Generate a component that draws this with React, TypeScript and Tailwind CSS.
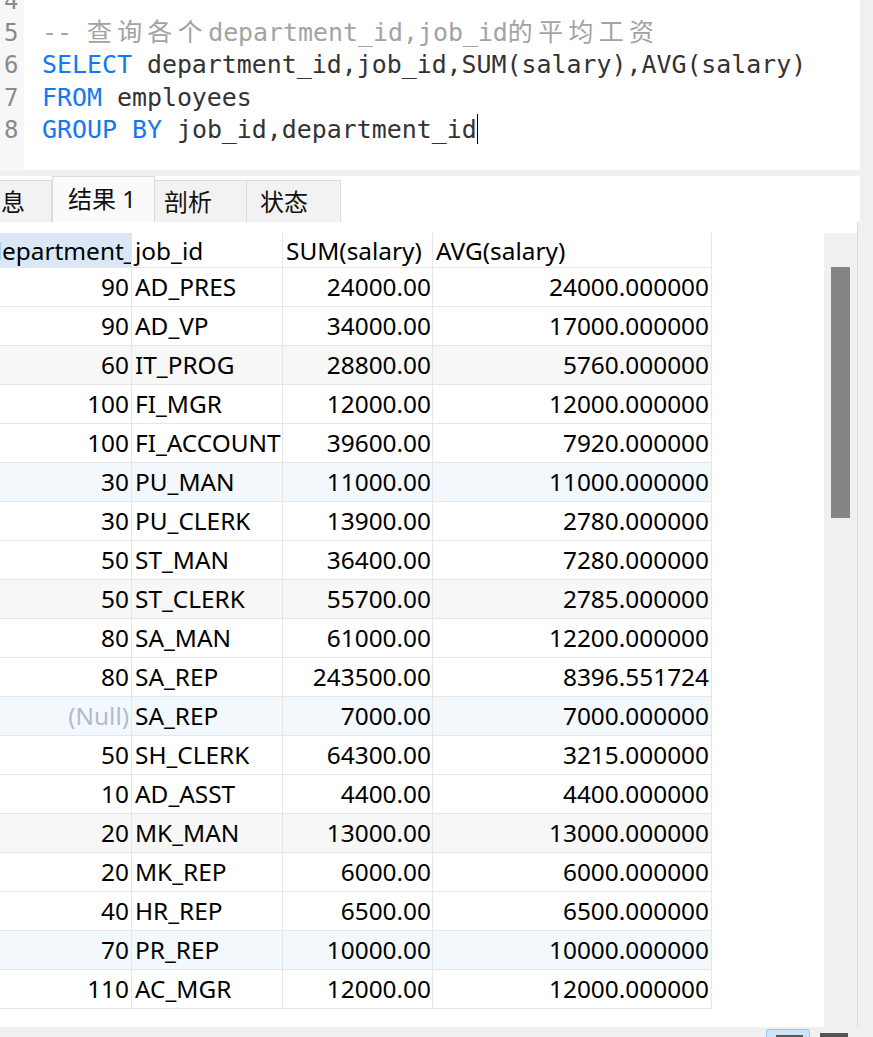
import React from 'react'

type Row = { dept: string; job: string; sum: string; avg: string }

const rows: Row[] = [
  { dept: '90', job: 'AD_PRES', sum: '24000.00', avg: '24000.000000' },
  { dept: '90', job: 'AD_VP', sum: '34000.00', avg: '17000.000000' },
  { dept: '60', job: 'IT_PROG', sum: '28800.00', avg: '5760.000000' },
  { dept: '100', job: 'FI_MGR', sum: '12000.00', avg: '12000.000000' },
  { dept: '100', job: 'FI_ACCOUNT', sum: '39600.00', avg: '7920.000000' },
  { dept: '30', job: 'PU_MAN', sum: '11000.00', avg: '11000.000000' },
  { dept: '30', job: 'PU_CLERK', sum: '13900.00', avg: '2780.000000' },
  { dept: '50', job: 'ST_MAN', sum: '36400.00', avg: '7280.000000' },
  { dept: '50', job: 'ST_CLERK', sum: '55700.00', avg: '2785.000000' },
  { dept: '80', job: 'SA_MAN', sum: '61000.00', avg: '12200.000000' },
  { dept: '80', job: 'SA_REP', sum: '243500.00', avg: '8396.551724' },
  { dept: '', job: 'SA_REP', sum: '7000.00', avg: '7000.000000' },
  { dept: '50', job: 'SH_CLERK', sum: '64300.00', avg: '3215.000000' },
  { dept: '10', job: 'AD_ASST', sum: '4400.00', avg: '4400.000000' },
  { dept: '20', job: 'MK_MAN', sum: '13000.00', avg: '13000.000000' },
  { dept: '20', job: 'MK_REP', sum: '6000.00', avg: '6000.000000' },
  { dept: '40', job: 'HR_REP', sum: '6500.00', avg: '6500.000000' },
  { dept: '70', job: 'PR_REP', sum: '10000.00', avg: '10000.000000' },
  { dept: '110', job: 'AC_MGR', sum: '12000.00', avg: '12000.000000' },
]

// every third row carries a faint tint, grey and blue in turn
const rowBg = (i: number) => {
  if (i % 3 !== 2) return 'bg-white'
  return Math.floor(i / 3) % 2 === 0 ? 'bg-[#f7f7f7]' : 'bg-[#f3f8fd]'
}

const mono = { fontFamily: '"DejaVu Sans Mono", "Liberation Mono", "Noto Sans CJK SC", monospace' }
const ui = { fontFamily: '"Noto Sans", "Noto Sans CJK SC", sans-serif' }

function Editor() {
  const kw = 'text-[#1577f2]'
  // CJK glyphs take two cells in the editor
  const cjk = 'tracking-[5.4px]'
  const lines: React.ReactNode[] = [
    <span />,
    <span className="text-[#a3a3a3]">
      -- <span className={cjk}>查询各个</span>department_id,job_id<span className={cjk}>的平均工资</span>
    </span>,
    <>
      <span className={kw}>SELECT</span> department_id,job_id,SUM(salary),AVG(salary)
    </>,
    <>
      <span className={kw}>FROM</span> employees
    </>,
    <>
      <span className={kw}>GROUP</span> <span className={kw}>BY</span> job_id,department_id
      <span className="inline-block w-px h-[30px] bg-black align-middle -mt-[4px]" />
    </>,
  ]
  return (
    <div className="flex h-[170px] w-[860px] bg-white overflow-hidden" style={mono}>
      <div className="w-[24px] bg-[#f7f7f7] shrink-0">
        <div className="-mt-[15px]">
          {[4, 5, 6, 7, 8].map((n) => (
            <div key={n} className="h-[32.2px] leading-[32.2px] text-[24px] text-[#8a8a8a] pl-[4px]">
              {n}
            </div>
          ))}
        </div>
      </div>
      <div className="pl-[18px] -mt-[15px] text-[#333] text-[24.9px]">
        {lines.map((l, i) => (
          <div key={i} className="h-[32.2px] leading-[32.2px] whitespace-pre">
            {l}
          </div>
        ))}
      </div>
    </div>
  )
}

function Tabs() {
  return (
    <div className="flex items-end h-[46px] w-[860px] bg-white overflow-hidden text-[24px] text-[#111]" style={ui}>
      <div className="-ml-[40px] w-[92px] h-[42px] bg-[#f2f2f2] border border-b-0 border-[#dcdcdc] pl-[16px] leading-[42px] shrink-0">
        信息
      </div>
      <div className="w-[103px] h-[46px] bg-[#fafafa] border border-b-0 border-[#dcdcdc] pl-[15px] leading-[44px] shrink-0">
        结果 1
      </div>
      <div className="w-[92px] h-[42px] bg-[#f2f2f2] border border-b-0 border-l-0 border-[#dcdcdc] pl-[9px] leading-[42px] shrink-0">
        剖析
      </div>
      <div className="w-[94px] h-[42px] bg-[#f2f2f2] border border-b-0 border-l-0 border-[#dcdcdc] pl-[13px] leading-[42px] shrink-0">
        状态
      </div>
    </div>
  )
}

function Grid() {
  const cols = 'grid grid-cols-[148px_151px_150px_279px]'
  const cell = 'border-r border-b border-[#e6e6e6] overflow-hidden whitespace-nowrap'
  return (
    <div className="flex-1 flex w-[858px] bg-white border-r border-[#dcdcdc] pt-[11px] overflow-hidden">
      <div className="w-[824px] overflow-hidden text-[24.4px] text-black" style={ui}>
        <div className={`${cols} -ml-[16px] w-[728px]`}>
          <div className={`${cell} h-[35px] leading-[35px] bg-[#dae8f6] pl-[3px]`}>department_</div>
          <div className={`${cell} h-[35px] leading-[35px] pl-[3px]`}>job_id</div>
          <div className={`${cell} h-[35px] leading-[35px] pl-[3px]`}>SUM(salary)</div>
          <div className={`${cell} h-[35px] leading-[35px] pl-[3px]`}>AVG(salary)</div>
          {rows.map((r, i) => (
            <React.Fragment key={i}>
              <div className={`${cell} ${rowBg(i)} h-[39px] leading-[38px] text-right pr-[2px]`}>
                {r.dept === '' ? <span className="text-[#b3bbcc]">(Null)</span> : r.dept}
              </div>
              <div className={`${cell} ${rowBg(i)} h-[39px] leading-[38px] pl-[3px]`}>{r.job}</div>
              <div className={`${cell} ${rowBg(i)} h-[39px] leading-[38px] text-right pr-[1px]`}>{r.sum}</div>
              <div className={`${cell} ${rowBg(i)} h-[39px] leading-[38px] text-right pr-[2px]`}>{r.avg}</div>
            </React.Fragment>
          ))}
        </div>
      </div>
      {/* vertical scrollbar */}
      <div className="w-[33px] bg-[#f0f0f0] pt-[34px] pl-[7px] shrink-0">
        <div className="w-[19px] h-[251px] bg-[#858585]" />
      </div>
    </div>
  )
}

export default function App() {
  return (
    <div className="w-[873px] h-[1037px] bg-[#f0f0f0] overflow-hidden flex flex-col">
      <Editor />
      <div className="h-[6px] shrink-0" />
      <Tabs />
      <Grid />
      <div className="h-[10px] shrink-0 relative">
        <div className="absolute left-[766px] top-[2px] w-[44px] h-[10px] bg-[#cce4f7] border border-[#99c9ef] rounded-t-[2px]">
          <div className="absolute left-[9px] top-[5px] w-[27px] h-[4px] bg-[#555]" />
        </div>
        <div className="absolute left-[820px] top-[6px] w-[28px] h-[4px] bg-[#555]" />
      </div>
    </div>
  )
}
